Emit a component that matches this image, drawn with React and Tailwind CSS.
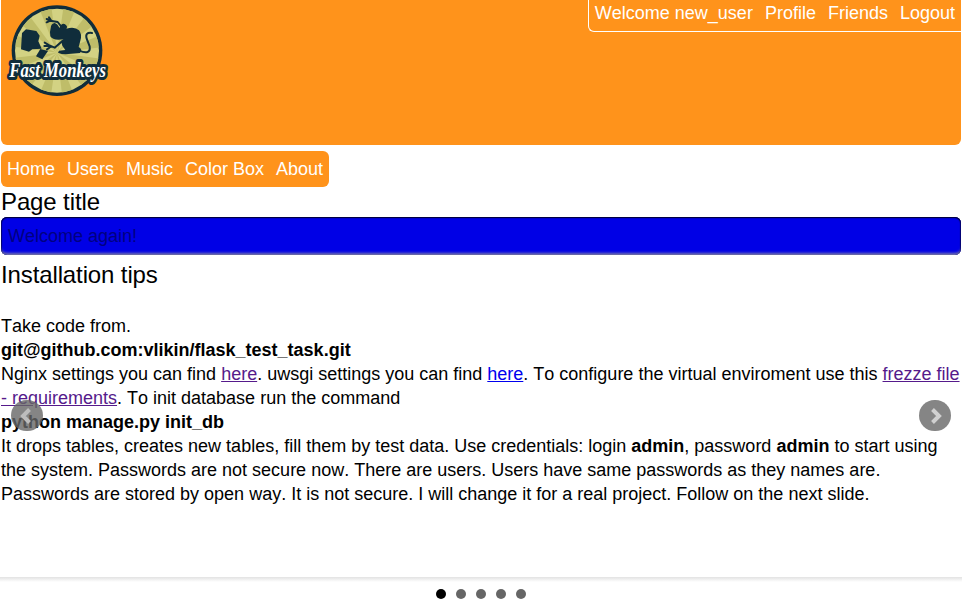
import React from 'react';

const userLinks = ['Welcome new_user', 'Profile', 'Friends', 'Logout'];
const menuLinks = ['Home', 'Users', 'Music', 'Color Box', 'About'];

function Logo() {
  const rays = Array.from({ length: 12 }, (_, i) => i * 30);
  return (
    <svg className="-ml-px block" width="120" height="105" viewBox="0 0 360 315">
      <defs>
        <clipPath id="disc">
          <circle cx="171" cy="152" r="126" />
        </clipPath>
      </defs>
      <circle cx="171" cy="152" r="136" fill="#102d3b" />
      <circle cx="171" cy="152" r="126" fill="#d3d283" />
      <g clipPath="url(#disc)" fill="#bfbd69">
        {rays.map((angle) => (
          <path key={angle} d="M171 158 L153 10 L192 10 Z" transform={`rotate(${angle + 15} 171 158)`} />
        ))}
      </g>
      <g fill="#102d3b">
        <path d="M66 99 L78 88 L109 93 L119 107 L115 124 L125 146 L97 148 L87 155 L63 148 Z" />
        <path d="M121 147 L144 153 L127 178 L108 169 Z" />
        <path d="M152 85 Q153 70 164 69 Q174 72 178 84 Q186 66 197 74 Q204 79 199 86 Q224 78 237 91 Q247 103 241 122 L236 141 Q249 149 240 159 L205 162 Q188 164 174 158 L177 152 L196 150 L187 137 L184 126 L190 118 Q159 123 151 109 Q148 98 152 85 Z" />
      </g>
      <g fill="none" stroke="#102d3b" strokeLinecap="round" strokeLinejoin="round">
        <path d="M188 85 L173 66 L151 62 L140 57 M151 62 L140 67 M153 61 L147 52" strokeWidth="6" />
        <path d="M188 122 L164 143 L148 136 L134 128 M148 138 L133 138 M151 141 L141 148" strokeWidth="6" />
        <path d="M236 151 Q273 167 269 139 L260 116 Q254 96 276 99" strokeWidth="6" />
      </g>
      <text
        x="28"
        y="230"
        textLength="290"
        lengthAdjust="spacingAndGlyphs"
        paintOrder="stroke"
        className="font-['Liberation_Serif',serif] text-[62px] font-bold italic"
        fill="white"
        stroke="#102d3b"
        strokeWidth="18"
        strokeLinejoin="round"
      >
        Fast Monkeys
      </text>
    </svg>
  );
}

function Arrow({ next }) {
  return (
    <button
      aria-label={next ? 'Next slide' : 'Previous slide'}
      className={`absolute top-[400px] flex h-[31px] w-8 items-center justify-center rounded-full ${next ? 'left-[919px] bg-[#858585]' : 'left-[11px] bg-[#666]/80'}`}
    >
      <svg width="32" height="32" viewBox="0 0 32 32" fill="none" stroke={next ? '#d0d0d0' : '#bdbdbd'} strokeWidth="4">
        <path d={next ? 'M13.5 9.5 L20 16 L13.5 22.5' : 'M18.5 9.5 L12 16 L18.5 22.5'} />
      </svg>
    </button>
  );
}

export default function App() {
  return (
    <div className="relative h-[599px] w-[962px] overflow-hidden bg-white px-px font-['Liberation_Sans',Arial,sans-serif] text-[18px] leading-6 text-black [font-kerning:none]">
      <header className="flex h-[145px] items-start justify-between rounded-b-md bg-[#ff931b]">
        <Logo />
        <nav className="-mr-px flex h-8 gap-3 rounded-bl-md border-b border-l border-white pl-1.5 pr-[7px] pt-px text-white">
          {userLinks.map((link) => (
            <a key={link} href="#">{link}</a>
          ))}
        </nav>
      </header>
      <nav className="mt-1.5 flex h-9 w-fit items-center gap-3 rounded-md bg-[#ff931b] px-1.5 text-white">
        {menuLinks.map((link) => (
          <a key={link} href="#">{link}</a>
        ))}
      </nav>
      <h1 className="h-[30px] text-[24px] leading-[30px] tracking-[-0.12px]">Page title</h1>
      <div className="h-[38px] rounded-md bg-[#0000e6] pl-[7px] leading-[38px] text-[#000080] shadow-[inset_0_1px_1px_#000040,inset_0_-4px_3px_-2px_#7777b0,inset_0_0_1px_1px_#000070]">
        Welcome again!
      </div>
      <h2 className="mt-[5px] text-[24px] leading-[30px] tracking-[-0.12px]">Installation tips</h2>
      <main className="mt-6 h-[263px] whitespace-nowrap">
        <p>Take code from.</p>
        <p className="font-bold">git@github.com:vlikin/flask_test_task.git</p>
        <p>
          Nginx settings you can find <a href="#" className="text-[#551a8b] underline">here</a>. uwsgi settings you can find{' '}
          <a href="#" className="text-[#0000ee] underline">here</a>. To configure the virtual enviroment use this{' '}
          <a href="#" className="text-[#551a8b] underline">frezze file<br />- requirements</a>. To init database run the command
        </p>
        <p className="font-bold">python manage.py init_db</p>
        <p>
          It drops tables, creates new tables, fill them by test data. Use credentials: login <b>admin</b>, password <b>admin</b> to start using<br />
          the system. Passwords are not secure now. There are users. Users have same passwords as they names are.<br />
          Passwords are stored by open way. It is not secure. I will change it for a real project. Follow on the next slide.
        </p>
      </main>
      <footer className="-mx-px flex h-[22px] justify-center gap-2.5 bg-linear-to-b from-[#e2e2e2] to-white to-[5px] pt-3">
        {[0, 1, 2, 3, 4].map((slide) => (
          <button
            key={slide}
            aria-label={`Slide ${slide + 1}`}
            className={`size-2.5 rounded-full ${slide === 0 ? 'bg-black' : 'bg-[#666]'}`}
          />
        ))}
      </footer>
      <Arrow />
      <Arrow next />
    </div>
  );
}
